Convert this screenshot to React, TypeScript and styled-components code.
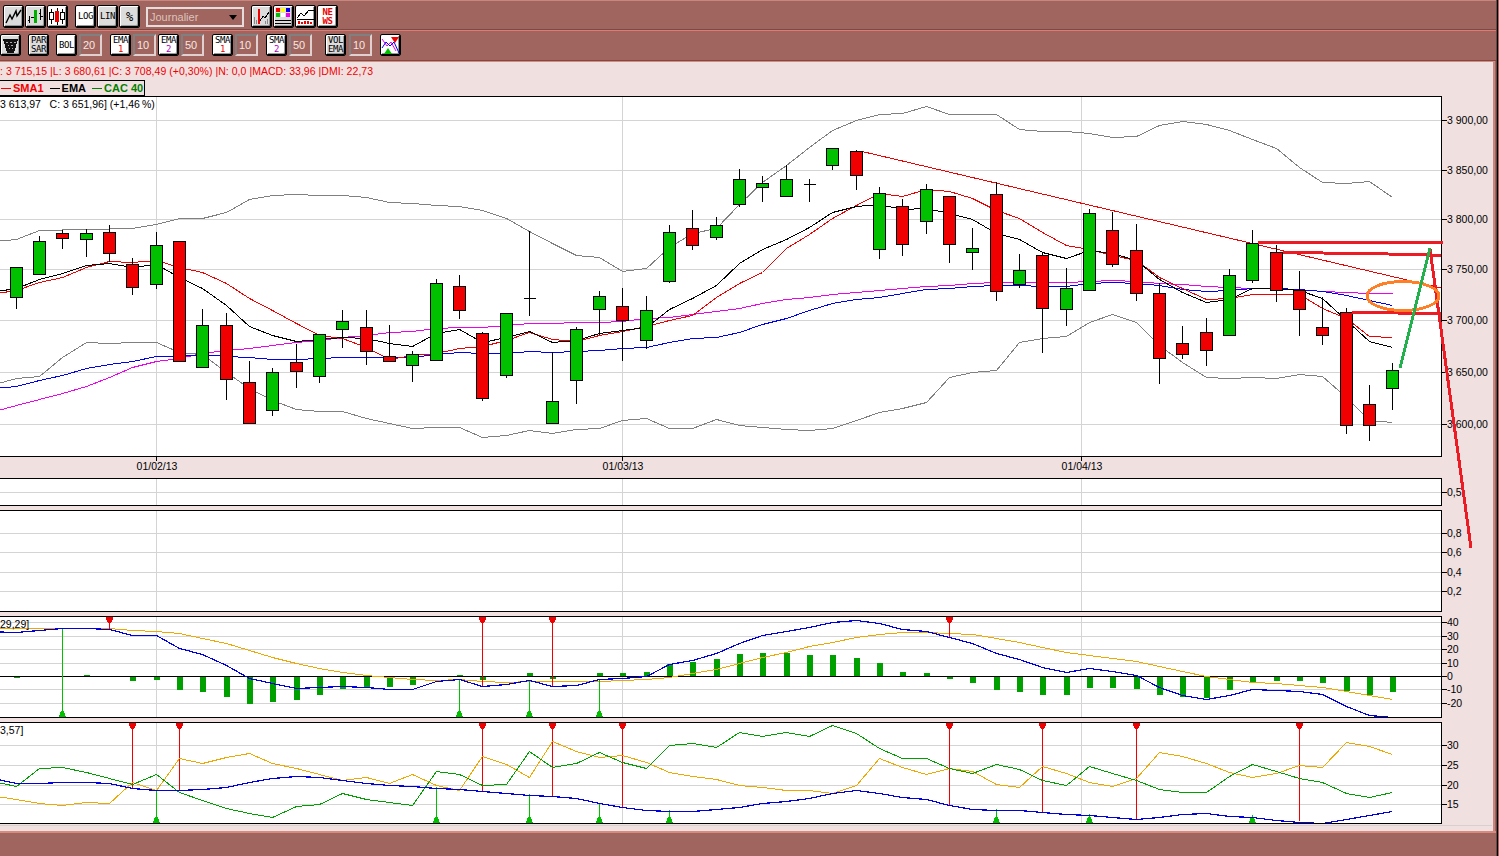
import styled, { createGlobalStyle } from 'styled-components';

const X = (i: number) => Math.floor(16 + (i * 70) / 3) + 0.5;

// [bodyTop, bodyBottom, wickHigh, wickLow, colour]
type Candle = [number, number, number, number, 'g' | 'r' | 'd'];
const candles: Candle[] = [
    [267, 297, 267, 309, 'g'], [241, 274, 236, 274, 'g'], [233, 238, 230, 249, 'r'], [233, 239, 229, 257, 'g'],
    [232, 253, 225, 262, 'r'], [264, 287, 258, 295, 'r'], [245, 284, 232, 289, 'g'], [241, 361, 241, 361, 'r'],
    [325, 367, 309, 367, 'g'], [325, 379, 313, 400, 'r'], [382, 423, 361, 423, 'r'], [372, 410, 368, 416, 'g'],
    [362, 371, 344, 388, 'r'], [334, 376, 334, 383, 'g'], [321, 329, 310, 348, 'g'], [327, 351, 310, 365, 'r'],
    [356, 361, 325, 362, 'r'], [354, 365, 351, 382, 'g'], [283, 360, 279, 360, 'g'], [286, 310, 275, 319, 'r'],
    [333, 398, 332, 401, 'r'], [313, 375, 313, 378, 'g'], [298, 298, 231, 316, 'd'], [401, 423, 352, 423, 'g'],
    [329, 380, 327, 404, 'g'], [296, 309, 291, 335, 'g'], [306, 320, 288, 361, 'r'], [310, 340, 296, 349, 'g'],
    [232, 281, 225, 283, 'g'], [228, 245, 210, 250, 'r'], [225, 237, 217, 240, 'g'], [179, 204, 169, 207, 'g'],
    [183, 187, 176, 202, 'g'], [179, 196, 165, 196, 'g'], [184, 184, 179, 202, 'd'], [148, 165, 148, 170, 'g'],
    [151, 175, 150, 190, 'r'], [193, 249, 187, 259, 'g'], [206, 244, 199, 256, 'r'], [189, 221, 184, 234, 'g'],
    [196, 244, 196, 263, 'r'], [248, 252, 228, 270, 'g'], [194, 291, 182, 301, 'r'], [270, 284, 254, 288, 'g'],
    [255, 308, 253, 353, 'r'], [288, 309, 268, 326, 'g'], [213, 290, 209, 290, 'g'], [230, 264, 212, 267, 'r'],
    [250, 293, 224, 301, 'r'], [293, 358, 283, 384, 'r'], [343, 354, 326, 359, 'r'], [332, 350, 318, 366, 'r'],
    [275, 335, 269, 335, 'g'], [243, 280, 230, 283, 'g'], [252, 290, 245, 302, 'r'], [290, 309, 271, 336, 'r'],
    [327, 335, 297, 345, 'r'], [312, 425, 308, 434, 'r'], [404, 425, 385, 441, 'r'], [370, 388, 363, 410, 'g'],
];

const upperBand = [239, 230, 229.5, 229, 228.5, 228, 224, 218, 218, 212, 199, 195, 194, 195, 195, 197, 202, 203, 205, 206, 210, 218, 231, 243, 255, 257, 271, 268, 247, 233, 228, 204, 182, 165, 147, 130, 120, 114, 113, 106, 114, 114, 114, 129, 131, 131, 133, 137, 136, 125, 121, 124, 130, 139, 148, 167, 182, 183, 181, 197];
const lowerBand = [378, 376, 357, 342, 343, 342, 342, 352, 354, 372, 388, 400, 409, 411, 411, 418, 423, 428, 427, 427, 437, 435, 430, 433, 429, 428, 420, 418, 428, 428, 419, 425, 427, 429, 430, 428, 420, 412, 408, 402, 377, 372, 370, 342, 338, 336, 322, 314, 322, 345, 362, 377, 378, 377, 378, 374, 376, 397, 420, 422];
const sma1 = [290, 282, 277, 267, 261, 262, 260, 267, 272, 283, 298, 310, 323, 335, 338, 347, 359, 355, 353, 348, 346, 340, 332, 339, 341, 335, 331, 326, 320, 315, 297, 283, 272, 248, 234, 218, 205, 193, 196, 189, 191, 198, 210, 218, 232, 245, 249, 255, 260, 277, 288, 299, 298, 294, 294, 294, 308, 318, 336, 337];
const ema = [288, 279, 273, 265, 263, 267, 264, 277, 288, 305, 326, 335, 341, 339, 337, 338, 343, 346, 333, 329, 342, 337, 331, 342, 340, 333, 330, 327, 309, 298, 285, 263, 249, 239, 227, 212, 206, 204, 209, 208, 213, 219, 233, 239, 252, 258, 250, 253, 260, 279, 292, 302, 299, 288, 288, 290, 298, 320, 341, 347];
const emaBlue = [386, 380, 375, 368, 364, 361, 356, 356, 354, 356, 357, 359, 359, 358, 357, 357, 357, 357, 354, 352, 353, 353, 351, 352, 351, 350, 348, 347, 342, 338, 337, 332, 324, 318, 310, 303, 299, 297, 293, 289, 288, 286, 285, 285, 286, 286, 283, 282, 283, 285, 289, 291, 290, 288, 288, 289, 291, 295, 300, 305];
const emaPink = [405, 399, 393, 386, 377, 367, 361, 358, 353, 350, 348, 345, 342, 340, 337, 335, 332, 331, 328, 327, 327, 325, 323, 323, 322, 322, 321, 318, 317, 314, 311, 308, 303, 299, 297, 294, 292, 290, 288, 286, 285, 283, 282, 282, 282, 282, 281, 280, 281, 283, 284, 286, 287, 288, 288, 289, 291, 292, 293, 293];

const macdBars = [-2, 0, 0, 1, 0, -5, -4, -14, -16, -21, -28, -26, -24, -19, -13, -11, -11, -9, -1, 1, -4, 0, 3, -3, 0, 3, 3, 4, 12, 14, 17, 22, 23, 23, 21, 21, 18, 13, 4, 3, -3, -7, -14, -16, -19, -19, -12, -12, -13, -19, -21, -22, -14, -6, -5, -5, -7, -15, -19, -16];
const macdLine = [632, 630, 628, 628, 629, 635, 635, 648, 654, 665, 678, 683, 688, 687, 686, 687, 689, 689, 681, 679, 686, 684, 680, 686, 685, 679, 678, 676, 664, 660, 653, 643, 635, 631, 627, 622, 620, 623, 629, 631, 637, 643, 653, 659, 667, 672, 668, 671, 675, 687, 695, 699, 695, 689, 690, 691, 694, 706, 715, 717];
const macdSignal = [628, 628, 628, 628, 628, 630, 631, 633, 638, 643, 650, 657, 663, 668, 672, 675, 677, 679, 680, 679, 681, 682, 681, 681, 681, 681, 680, 679, 677, 673, 669, 663, 657, 652, 646, 642, 637, 634, 632, 632, 633, 634, 638, 642, 647, 652, 655, 658, 661, 666, 671, 676, 679, 682, 683, 685, 687, 691, 695, 699];
const dmiBlue = [783, 783, 782, 782, 783, 788, 790, 790, 789, 787, 782, 778, 776, 777, 780, 783, 785, 786, 788, 789, 791, 793, 795, 796, 798, 803, 807, 810, 811, 811, 809, 807, 803, 801, 798, 793, 790, 793, 797, 799, 805, 809, 810, 810, 812, 814, 815, 817, 819, 817, 814, 813, 816, 817, 820, 822, 823, 819, 815, 811];
const dmiGreen = [786, 768, 767, 772, 778, 784, 774, 792, 800, 808, 813, 817, 806, 804, 793, 799, 802, 805, 771, 774, 785, 784, 751, 767, 763, 752, 762, 768, 745, 743, 747, 732, 736, 732, 736, 725, 733, 748, 758, 758, 768, 773, 764, 769, 780, 785, 766, 773, 780, 789, 792, 792, 776, 764, 771, 778, 782, 793, 797, 792];
const dmiOrange = [799, 803, 805, 802, 803, 782, 790, 758, 763, 757, 753, 763, 768, 774, 780, 777, 783, 774, 785, 790, 756, 764, 777, 741, 751, 757, 755, 762, 772, 776, 779, 785, 787, 790, 790, 793, 785, 758, 767, 774, 768, 771, 784, 787, 766, 773, 782, 786, 778, 752, 756, 763, 772, 777, 773, 765, 767, 742, 746, 754];

const line = (ys: number[], first?: number) =>
    (first !== undefined ? `0,${first} ` : '') + ys.map((y, i) => `${X(i)},${y + 0.5}`).join(' ');

const GRID_X = [156, 622, 1081];

function Grid({ ys, top, height }: { ys: number[]; top: number; height: number }) {
    return (
        <g stroke="#d4d4d4" shapeRendering="crispEdges">
            {ys.map(y => <line key={y} x1={0} x2={1441} y1={y + 0.5} y2={y + 0.5} />)}
            {GRID_X.map(x => <line key={x} x1={x + 0.5} x2={x + 0.5} y1={top} y2={top + height} />)}
        </g>
    );
}

function Trace({ points, color, width = 1 }: { points: string; color: string; width?: number }) {
    return <polyline points={points} fill="none" stroke={color} strokeWidth={width} shapeRendering="crispEdges" />;
}

function CandleMark({ c, i }: { c: Candle; i: number }) {
    const [top, bottom, high, low, kind] = c;
    const x = X(i);
    return (
        <g shapeRendering="crispEdges">
            <line x1={x} x2={x} y1={high} y2={low} stroke="#000" />
            {kind === 'd'
                ? <rect x={x - 6} y={top} width={12} height={1} fill="#000" />
                : <rect x={x - 6} y={top + 0.5} width={12} height={bottom - top} fill={kind === 'g' ? '#00c000' : '#f00000'} stroke="#000" />}
        </g>
    );
}

function SellSignal({ x, top, to }: { x: number; top: number; to: number }) {
    return (
        <g shapeRendering="crispEdges">
            <line x1={x + 0.5} x2={x + 0.5} y1={top} y2={to} stroke="#f00000" />
            <polygon points={`${x - 3},${top} ${x + 4},${top} ${x + 4},${top + 2} ${x + 2},${top + 6} ${x - 1},${top + 6} ${x - 3},${top + 2}`} fill="#f00000" />
        </g>
    );
}

function BuySignal({ x, bottom, to }: { x: number; bottom: number; to: number }) {
    return (
        <g shapeRendering="crispEdges">
            <line x1={x + 0.5} x2={x + 0.5} y1={to} y2={bottom} stroke="#00c000" />
            <polygon points={`${x - 3},${bottom} ${x + 4},${bottom} ${x + 2},${bottom - 6} ${x - 1},${bottom - 6}`} fill="#00c000" />
        </g>
    );
}

function Axis({ top, height, ticks }: { top: number; height: number; ticks: [number, string][] }) {
    return (
        <AxisSvg viewBox={`0 ${top} 52 ${height}`} width={52} height={height}>
            {ticks.map(([y, label]) => (
                <g key={label}>
                    <line x1={0} x2={5} y1={y + 0.5} y2={y + 0.5} stroke="#000" shapeRendering="crispEdges" />
                    <AxisLabel x={5} y={y + 3.5}>{label}</AxisLabel>
                </g>
            ))}
        </AxisSvg>
    );
}

const priceTicks: [number, string][] = [[120, '3 900,00'], [170, '3 850,00'], [219, '3 800,00'], [269, '3 750,00'], [320, '3 700,00'], [372, '3 650,00'], [424, '3 600,00']];
const volTicks: [number, string][] = [[533, '0,8'], [552, '0,6'], [572, '0,4'], [591, '0,2']];
const macdTicks: [number, string][] = [[622, '40'], [636, '30'], [649, '20'], [663, '10'], [676, '0'], [689, '-10'], [703, '-20']];
const dmiTicks: [number, string][] = [[745, '30'], [765, '25'], [785, '20'], [804, '15']];

function App() {
    return (
        <Page>
            <GlobalStyle />
            <Window>
                <ToolRow $height={30} $buttonHeight={23}>
                    <Cluster $after={7} $before={3} $gap={1}>
                        <ToolButton $tone="light">
                            <svg width="17" height="17" viewBox="0 0 17 17"><polyline points="1,15 5,7 7,11 11,3 12,8 16,2" fill="none" stroke="#000" strokeWidth="1.4" /></svg>
                        </ToolButton>
                        <ToolButton $tone="light">
                            <svg width="17" height="17" viewBox="0 0 17 17" shapeRendering="crispEdges">
                                <path d="M2.5 8v7M1 12h2M13.5 1v11M12 5h1M14 8h2" stroke="#000" fill="none" />
                                <path d="M8.5 2v13" stroke="#00b000" strokeWidth="3" fill="none" />
                                <path d="M4 9h3" stroke="#000" fill="none" />
                            </svg>
                        </ToolButton>
                        <ToolButton>
                            <svg width="17" height="19" viewBox="0 0 17 19" shapeRendering="crispEdges">
                                <path d="M2.5 2v15M13.5 2v15" stroke="#000" />
                                <rect x="0.5" y="5.5" width="4" height="7" fill="#fff" stroke="#000" />
                                <rect x="11.5" y="5.5" width="4" height="7" fill="#fff" stroke="#000" />
                                <path d="M8 1v17" stroke="#000" />
                                <rect x="6" y="4" width="4" height="11" fill="#f00000" />
                            </svg>
                        </ToolButton>
                    </Cluster>
                    <Cluster $after={6} $gap={1}>
                        <ToolButton><ButtonLabel>LOG</ButtonLabel></ToolButton>
                        <ToolButton $tone="light"><ButtonLabel>LIN</ButtonLabel></ToolButton>
                        <ToolButton $tone="light"><ButtonLabel $large>%</ButtonLabel></ToolButton>
                    </Cluster>
                    <PeriodSelect>
                        <span>Journalier</span>
                        <SelectArrow />
                    </PeriodSelect>
                    <Cluster $before={7} $gap={1}>
                        <ToolButton $tone="light">
                            <svg width="17" height="17" viewBox="0 0 17 17" shapeRendering="crispEdges">
                                <path d="M1.5 9v7M3.5 12v4M12.5 13v3M14.5 11v5" stroke="#888" />
                                <path d="M5.5 1v15" stroke="#f00000" strokeWidth="2" />
                                <polyline points="7,13 10,8 12,10 16,4" fill="none" stroke="#000" />
                            </svg>
                        </ToolButton>
                        <ToolButton $tone="light">
                            <svg width="17" height="17" viewBox="0 0 17 17" shapeRendering="crispEdges">
                                <rect x="1" y="0" width="4" height="4" fill="#f00000" />
                                <rect x="6" y="0" width="4" height="4" fill="#ffff00" />
                                <rect x="11" y="0" width="4" height="4" fill="#0000f0" />
                                <rect x="1" y="5" width="4" height="4" fill="#00c000" />
                                <rect x="6" y="5" width="4" height="4" fill="#fff" />
                                <rect x="11" y="5" width="4" height="4" fill="#f000f0" />
                                <path d="M0 12h16M0 15h16" stroke="#000" />
                            </svg>
                        </ToolButton>
                        <ToolButton>
                            <svg width="19" height="17" viewBox="0 0 19 17" shapeRendering="crispEdges">
                                <polyline points="1,10 5,5 8,8 13,2 18,2" fill="none" stroke="#000" />
                                <path d="M1 11.5h17" stroke="#000" />
                                <path d="M3 16v-3M6 16v-2M9 16v-3M12 16v-3M15 16v-2" stroke="#f00000" strokeWidth="2" />
                            </svg>
                        </ToolButton>
                        <ToolButton>
                            <StackLabel $color="#f00000" $bold>NE</StackLabel>
                            <StackLabel $color="#f00000" $bold>WS</StackLabel>
                        </ToolButton>
                    </Cluster>
                </ToolRow>
                <ToolRow $height={31} $buttonHeight={22} $last>
                    <Cluster $after={7}>
                        <ToolButton $tone="light">
                            <svg width="15" height="17" viewBox="0 0 15 17" shapeRendering="crispEdges">
                                <polygon points="0,2 15,2 11,16 4,16" fill="#111" />
                                <path d="M3 5h2M7 5h2M11 5h2M5 8h1M8 8h2M6 11h1M9 11h1" stroke="#aaa" />
                            </svg>
                        </ToolButton>
                    </Cluster>
                    <Cluster $after={7}>
                        <ToolButton $tone="light">
                            <StackLabel>PAR</StackLabel>
                            <StackLabel>SAR</StackLabel>
                        </ToolButton>
                    </Cluster>
                    <Cluster $after={8} $gap={2}>
                        <ToolButton><ButtonLabel>BOL</ButtonLabel></ToolButton>
                        <ValueBox readOnly value="20" />
                    </Cluster>
                    <Cluster $after={8} $gap={2}>
                        <ToolButton>
                            <StackLabel>EMA</StackLabel>
                            <StackLabel $color="#f00000">1</StackLabel>
                        </ToolButton>
                        <ValueBox readOnly value="10" />
                        <ToolButton>
                            <StackLabel>EMA</StackLabel>
                            <StackLabel $color="#b000c0">2</StackLabel>
                        </ToolButton>
                        <ValueBox readOnly value="50" />
                    </Cluster>
                    <Cluster $after={8} $gap={2}>
                        <ToolButton>
                            <StackLabel>SMA</StackLabel>
                            <StackLabel $color="#f00000">1</StackLabel>
                        </ToolButton>
                        <ValueBox readOnly value="10" />
                    </Cluster>
                    <Cluster $after={13} $gap={2}>
                        <ToolButton>
                            <StackLabel>SMA</StackLabel>
                            <StackLabel $color="#b000c0">2</StackLabel>
                        </ToolButton>
                        <ValueBox readOnly value="50" />
                    </Cluster>
                    <Cluster $after={8} $gap={3}>
                        <ToolButton $tone="light">
                            <StackLabel>VOL</StackLabel>
                            <StackLabel>EMA</StackLabel>
                        </ToolButton>
                        <ValueBox readOnly value="10" />
                    </Cluster>
                    <ToolButton>
                        <svg width="19" height="19" viewBox="0 0 19 19">
                            <polyline points="1,3 6,10 10,6 15,15" fill="none" stroke="#f000f0" />
                            <polyline points="1,12 5,6 9,10 13,6 18,17" fill="none" stroke="#0000f0" />
                            <polygon points="10,1 18,1 14,7" fill="#f00000" />
                            <polygon points="3,18 11,18 7,12" fill="#00c000" />
                        </svg>
                    </ToolButton>
                </ToolRow>
                <Content>
                    <InfoText>: 3 715,15 |L: 3 680,61 |C: 3 708,49 (+0,30%) |N: 0,0 |MACD: 33,96 |DMI: 22,73</InfoText>
                    <Legend>
                        <LegendItem $color="#f00000">SMA1</LegendItem>
                        <LegendItem $color="#000">EMA</LegendItem>
                        <LegendItem $color="#008000">CAC 40</LegendItem>
                    </Legend>

                    <PanelRow>
                        <Plot>
                            <PlotSvg viewBox="0 97 1441 359" width={1441} height={359}>
                                <Grid ys={[120, 170, 219, 269, 320, 372, 424]} top={97} height={359} />
                                <Trace points={line(upperBand, 241)} color="#808080" />
                                <Trace points={line(lowerBand, 383)} color="#808080" />
                                <Trace points={line(emaPink, 410)} color="#f000f0" />
                                <Trace points={line(emaBlue, 388)} color="#0000f0" />
                                <Trace points={line(sma1, 293)} color="#f00000" />
                                <Trace points={line(ema, 291)} color="#000" />
                                <line x1={860} y1={151} x2={1441} y2={288} stroke="#f00000" shapeRendering="crispEdges" />
                                {candles.map((c, i) => <CandleMark key={i} c={c} i={i} />)}
                                <ChartText x={0} y={108}>3 613,97   C: 3 651,96] (+1,46{'\u2009'}%)</ChartText>
                            </PlotSvg>
                        </Plot>
                        <Axis top={97} height={359} ticks={priceTicks} />
                    </PanelRow>
                    <DateStrip viewBox="0 0 1441 21" width={1441} height={21}>
                        {[[156, '01/02/13'], [622, '01/03/13'], [1081, '01/04/13']].map(([x, label]) => (
                            <g key={label}>
                                <line x1={Number(x) + 0.5} x2={Number(x) + 0.5} y1={0} y2={4} stroke="#000" shapeRendering="crispEdges" />
                                <AxisLabel x={Number(x) + 1} y={13} textAnchor="middle">{label}</AxisLabel>
                            </g>
                        ))}
                    </DateStrip>

                    <PanelRow>
                        <Plot>
                            <PlotSvg viewBox="0 479 1441 26" width={1441} height={26}>
                                <Grid ys={[492]} top={479} height={26} />
                            </PlotSvg>
                        </Plot>
                        <Axis top={479} height={26} ticks={[[492, '0,5']]} />
                    </PanelRow>

                    <PanelRow $gap>
                        <Plot>
                            <PlotSvg viewBox="0 511 1441 100" width={1441} height={100}>
                                <Grid ys={[533, 552, 572, 591]} top={511} height={100} />
                            </PlotSvg>
                        </Plot>
                        <Axis top={511} height={100} ticks={volTicks} />
                    </PanelRow>

                    <PanelRow $gap>
                        <Plot>
                            <PlotSvg viewBox="0 617 1441 100" width={1441} height={100}>
                                <Grid ys={[622, 636, 649, 663, 689, 703]} top={617} height={100} />
                                {macdBars.map((b, i) => b !== 0 && (
                                    <rect key={i} x={X(i) - 2.5} y={b > 0 ? 676 - b : 676} width={6} height={Math.abs(b)} fill="#00a000" shapeRendering="crispEdges" />
                                ))}
                                <line x1={0} x2={1441} y1={676.5} y2={676.5} stroke="#000" shapeRendering="crispEdges" />
                                <Trace points={line(macdSignal, 628)} color="#f0a800" />
                                <SellSignal x={109} top={617} to={629} />
                                <SellSignal x={482} top={617} to={686} />
                                <SellSignal x={552} top={617} to={686} />
                                <SellSignal x={949} top={617} to={637} />
                                <BuySignal x={62} bottom={717} to={628} />
                                <BuySignal x={459} bottom={717} to={679} />
                                <BuySignal x={529} bottom={717} to={680} />
                                <BuySignal x={599} bottom={717} to={679} />
                                <Trace points={line(macdLine, 632)} color="#0000e0" width={1.2} />
                                <ChartText x={0} y={628}>29,29]</ChartText>
                            </PlotSvg>
                        </Plot>
                        <Axis top={617} height={100} ticks={macdTicks} />
                    </PanelRow>

                    <PanelRow $gap>
                        <Plot>
                            <PlotSvg viewBox="0 723 1441 100" width={1441} height={100}>
                                <Grid ys={[745, 765, 785, 804]} top={723} height={100} />
                                {[[132, 788], [179, 790], [482, 791], [552, 796], [622, 807], [949, 805], [1042, 812], [1136, 819], [1299, 821]].map(([x, to]) => (
                                    <SellSignal key={x} x={x} top={723} to={to} />
                                ))}
                                {[[156, 790], [436, 787], [529, 794], [599, 803], [669, 810], [996, 809], [1089, 814], [1252, 815]].map(([x, to]) => (
                                    <BuySignal key={x} x={x} bottom={823} to={to} />
                                ))}
                                <Trace points={line(dmiOrange, 797)} color="#f0a800" />
                                <Trace points={line(dmiGreen, 783)} color="#00a000" />
                                <Trace points={line(dmiBlue, 780)} color="#0000e0" width={1.2} />
                                <ChartText x={0} y={734}>3,57]</ChartText>
                            </PlotSvg>
                        </Plot>
                        <Axis top={723} height={100} ticks={dmiTicks} />
                    </PanelRow>
                    <FootRule />
                </Content>
                <BottomBar />
            </Window>
            <EdgeStrip />
            <Sketch width={1499} height={856} viewBox="0 0 1499 856">
                <g fill="none" stroke="#ed1c24" strokeWidth={3} shapeRendering="crispEdges">
                    <line x1={1258} y1={242.5} x2={1443} y2={242.5} />
                    <polyline points="1283,252.5 1363,253.5 1413,254.5 1441,255.5" />
                    <polyline points="1352,312.5 1441,313.5" />
                    <line x1={1430} y1={249} x2={1471} y2={548} />
                </g>
                <ellipse cx={1403} cy={296} rx={36} ry={14.5} fill="none" stroke="#ff7f27" strokeWidth={3} shapeRendering="crispEdges" />
                <line x1={1400} y1={368} x2={1430} y2={248} stroke="#22b14c" strokeWidth={3} shapeRendering="crispEdges" />
            </Sketch>
        </Page>
    );
}

const GlobalStyle = createGlobalStyle`
    html, body {
        margin: 0;
        padding: 0;
        background: #a0655f;
    }
    * {
        box-sizing: border-box;
    }
`;

const Page = styled.div`
    position: relative;
    width: 1499px;
    height: 856px;
    display: flex;
    overflow: hidden;
    background: #a0655f;
    font-family: "Liberation Sans", sans-serif;
`;

const Window = styled.div`
    flex: 1;
    min-width: 0;
    display: flex;
    flex-direction: column;
`;

const EdgeStrip = styled.div`
    width: 3px;
    background: #000;
    border-left: 1px solid #704540;
    border-right: 1px solid #a0655f;
`;

const ToolRow = styled.div<{ $height: number; $buttonHeight: number; $last?: boolean }>`
    --btn-h: ${p => p.$buttonHeight}px;
    height: ${p => p.$height}px;
    flex: none;
    display: flex;
    align-items: flex-start;
    border-top: 1px solid ${p => (p.$last ? '#e07a72' : '#c9867e')};
    border-bottom: 1px solid #7a4a45;
    padding-top: ${p => (p.$last ? 3 : 4)}px;
`;

const Cluster = styled.div<{ $after?: number; $before?: number; $gap?: number }>`
    display: flex;
    align-items: center;
    gap: ${p => p.$gap || 0}px;
    margin-left: ${p => p.$before || 0}px;
    margin-right: ${p => p.$after || 0}px;
`;

const ToolButton = styled.div<{ $tone?: 'light' }>`
    width: 21px;
    height: var(--btn-h);
    flex: none;
    display: flex;
    flex-direction: column;
    align-items: center;
    justify-content: center;
    background: ${p => (p.$tone === 'light' ? '#dcdcdc' : '#fff')};
    border: 1px solid #000;
    border-radius: 2px;
    box-shadow: inset -1px -1px 0 #000, inset 1px 1px 0 #fff, inset -2px -2px 0 #999;
    overflow: hidden;
`;

const ButtonLabel = styled.span<{ $large?: boolean }>`
    font-family: "DejaVu Sans Mono", monospace;
    font-size: ${p => (p.$large ? 12 : 9)}px;
    line-height: 1;
    letter-spacing: ${p => (p.$large ? 0 : -0.4)}px;
    color: #000;
`;

const StackLabel = styled.span<{ $color?: string; $bold?: boolean }>`
    font-family: "DejaVu Sans Mono", monospace;
    font-size: 9px;
    line-height: 9px;
    letter-spacing: -0.4px;
    font-weight: ${p => (p.$bold ? 700 : 400)};
    color: ${p => p.$color || '#000'};
`;

const ValueBox = styled.input`
    width: 23px;
    height: 22px;
    flex: none;
    padding: 0 0 0 2px;
    background: #a0655f;
    border-style: solid;
    border-width: 2px;
    border-color: #808080 #e0d0d0 #e0d0d0 #808080;
    color: #f4e8e0;
    font-family: "Liberation Sans", sans-serif;
    font-size: 11px;
    outline: none;
`;

const PeriodSelect = styled.div`
    width: 98px;
    height: 20px;
    flex: none;
    margin-top: 2px;
    display: flex;
    align-items: center;
    justify-content: space-between;
    padding: 0 5px 0 2px;
    border: 2px solid #e6dcdc;
    background: #a0655f;
    color: #dcc4bc;
    font-size: 11px;
`;

const SelectArrow = styled.i`
    width: 0;
    height: 0;
    border-left: 4px solid transparent;
    border-right: 4px solid transparent;
    border-top: 5px solid #000;
`;

const Content = styled.div`
    height: 770px;
    flex: none;
    margin-right: 1px;
    background: #f0e0e0;
    border-top: 1px solid #d98a80;
    box-shadow: inset -2px 0 0 #c9867e;
    display: flex;
    flex-direction: column;
`;

const InfoText = styled.div`
    height: 18px;
    line-height: 19px;
    font-size: 10.5px;
    letter-spacing: 0.04px;
    color: #f00000;
    white-space: nowrap;
`;

const Legend = styled.div`
    width: 146px;
    height: 16px;
    margin-left: -1px;
    display: flex;
    align-items: center;
    gap: 6px;
    padding-left: 1px;
    background: #f0e0e0;
    border: 1px solid #000;
    white-space: nowrap;
`;

const LegendItem = styled.span<{ $color: string }>`
    display: flex;
    align-items: center;
    gap: 2px;
    font-size: 11px;
    font-weight: 700;
    line-height: 1;
    color: ${p => p.$color};
    &::before {
        content: '';
        width: 10px;
        height: 1px;
        background: ${p => p.$color};
    }
`;

const PanelRow = styled.div<{ $gap?: boolean }>`
    display: flex;
    margin-top: ${p => (p.$gap ? 4 : 0)}px;
`;

const Plot = styled.div`
    width: 1442px;
    flex: none;
    background: #fff;
    border-style: solid;
    border-color: #000;
    border-width: 1px 1px 1px 0;
`;

const PlotSvg = styled.svg`
    display: block;
`;

const AxisSvg = styled.svg`
    display: block;
    flex: none;
    margin-top: 1px;
    overflow: visible;
`;

const ChartText = styled.text`
    font-family: "Liberation Sans", sans-serif;
    font-size: 10.5px;
    fill: #000;
    white-space: pre;
`;

const AxisLabel = styled.text`
    font-family: "Liberation Sans", sans-serif;
    font-size: 10.5px;
    fill: #000;
`;

const DateStrip = styled.svg`
    display: block;
    flex: none;
`;

const FootRule = styled.div`
    height: 1px;
    margin-top: auto;
    margin-bottom: 5px;
    margin-right: 3px;
    background: #d8d0d0;
`;

const BottomBar = styled.div`
    flex: 1;
    border-top: 2px solid #d98a80;
`;

const Sketch = styled.svg`
    position: absolute;
    left: 0;
    top: 0;
    pointer-events: none;
`;

export default App
